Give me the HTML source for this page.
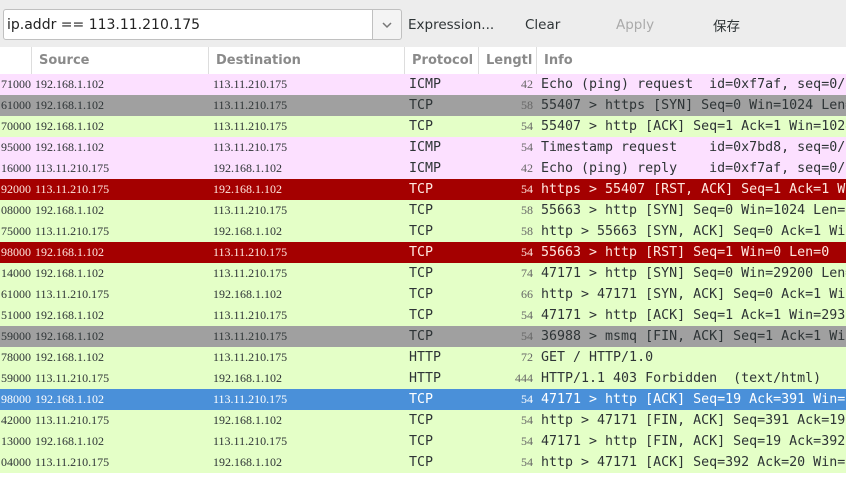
<!DOCTYPE html>
<html><head><meta charset="utf-8"><style>
body{margin:0;width:846px;height:480px;overflow:hidden;background:#fff;position:relative;font-family:"Liberation Sans",sans-serif}
#tb{position:absolute;left:0;top:0;width:846px;height:47px;background:#ededed}
#inp{position:absolute;left:3px;top:9px;width:370px;height:31px;background:#fff;border:1px solid #c0c0c0;border-radius:3px 0 0 3px;font-family:"DejaVu Sans",sans-serif;font-size:14px;line-height:31px;padding-left:3px;box-sizing:border-box;color:#222}
#dd{position:absolute;left:372px;top:9px;width:30px;height:31px;border:1px solid #c0c0c0;border-radius:0 3px 3px 0;background:#f4f4f4;box-sizing:border-box}
.btn{position:absolute;top:17px;font-family:"DejaVu Sans",sans-serif;font-size:13.5px;color:#2e3436}
#hdr{position:absolute;left:0;top:47px;width:846px;height:27px;background:#fff;font-family:"DejaVu Sans",sans-serif;font-weight:bold;font-size:13px;color:#8a8a8a}
#hdr span{position:absolute;top:6px}
.sep{position:absolute;top:0;width:1px;height:27px;background:#ddd}
.r{position:absolute;left:0;width:846px;height:21px;white-space:nowrap}
.r span{position:absolute;top:0;line-height:21px}
.t,.s,.d,.l{font-family:"Liberation Serif",serif;font-size:12px}
.p,.i{font-family:"DejaVu Sans Mono",monospace;font-size:13.3px}
.t{right:815px}.s{left:35px}.d{left:213px}.p{left:409px}.l{right:313px}.i{left:541px}
</style></head><body>
<div id="tb">
<div id="inp">ip.addr == 113.11.210.175</div>
<div id="dd"><svg width="28" height="29"><path d="M10 13 L14 17 L18 13" fill="none" stroke="#777" stroke-width="1.5"/></svg></div>
<div class="btn" style="left:408px">Expression...</div>
<div class="btn" style="left:525px">Clear</div>
<div class="btn" style="left:616px;color:#aaa">Apply</div>
<div class="btn" style="left:713px;font-family:'Noto Sans CJK SC',sans-serif;top:15px">保存</div>
</div>
<div id="hdr">
<div class="sep" style="left:31px"></div><div class="sep" style="left:208px"></div><div class="sep" style="left:404px"></div><div class="sep" style="left:478px"></div><div class="sep" style="left:536px"></div>
<span style="left:39px">Source</span><span style="left:216px">Destination</span><span style="left:412px">Protocol</span><span style="left:486px">Lengtl</span><span style="left:544px">Info</span>
</div>
<div id="rows"></div>
<script>
var P='#fce0ff',G='#a0a0a0',L='#e4ffc7',R='#a40000',B='#4a90d9';
var A='192.168.1.102',Z='113.11.210.175';
var d=[
['71000',A,Z,'ICMP','42','Echo (ping) request  id=0xf7af, seq=0/0',P],
['61000',A,Z,'TCP','58','55407 > https [SYN] Seq=0 Win=1024 Len=0',G],
['70000',A,Z,'TCP','54','55407 > http [ACK] Seq=1 Ack=1 Win=1024',L],
['95000',A,Z,'ICMP','54','Timestamp request    id=0x7bd8, seq=0/0',P],
['16000',Z,A,'ICMP','42','Echo (ping) reply    id=0xf7af, seq=0/0',P],
['92000',Z,A,'TCP','54','https > 55407 [RST, ACK] Seq=1 Ack=1 Win',R],
['08000',A,Z,'TCP','58','55663 > http [SYN] Seq=0 Win=1024 Len=0',L],
['75000',Z,A,'TCP','58','http > 55663 [SYN, ACK] Seq=0 Ack=1 Win',L],
['98000',A,Z,'TCP','54','55663 > http [RST] Seq=1 Win=0 Len=0',R],
['14000',A,Z,'TCP','74','47171 > http [SYN] Seq=0 Win=29200 Len=0',L],
['61000',Z,A,'TCP','66','http > 47171 [SYN, ACK] Seq=0 Ack=1 Win',L],
['51000',A,Z,'TCP','54','47171 > http [ACK] Seq=1 Ack=1 Win=2930',L],
['59000',A,Z,'TCP','54','36988 > msmq [FIN, ACK] Seq=1 Ack=1 Win',G],
['78000',A,Z,'HTTP','72','GET / HTTP/1.0',L],
['59000',Z,A,'HTTP','444','HTTP/1.1 403 Forbidden  (text/html)',L],
['98000',A,Z,'TCP','54','47171 > http [ACK] Seq=19 Ack=391 Win=3',B],
['42000',Z,A,'TCP','54','http > 47171 [FIN, ACK] Seq=391 Ack=19',L],
['13000',A,Z,'TCP','54','47171 > http [FIN, ACK] Seq=19 Ack=392',L],
['04000',Z,A,'TCP','54','http > 47171 [ACK] Seq=392 Ack=20 Win=',L]];
var h='';
d.forEach(function(r,k){var c=r[6]==R?'#ffe8e0':r[6]==B?'#fff':'#2e3436';
h+='<div class="r" style="top:'+(74+k*21)+'px;background:'+r[6]+';color:'+c+'"><span class="t">'+r[0]+'</span><span class="s">'+r[1]+'</span><span class="d">'+r[2]+'</span><span class="p">'+r[3]+'</span><span class="l" style="'+(r[6]==R||r[6]==B?'':'color:#666')+'">'+r[4]+'</span><span class="i">'+r[5].replace(/ /g,'&nbsp;').replace(/>/g,'&gt;')+'</span></div>';});
document.getElementById('rows').innerHTML=h;
</script>
</body></html>
